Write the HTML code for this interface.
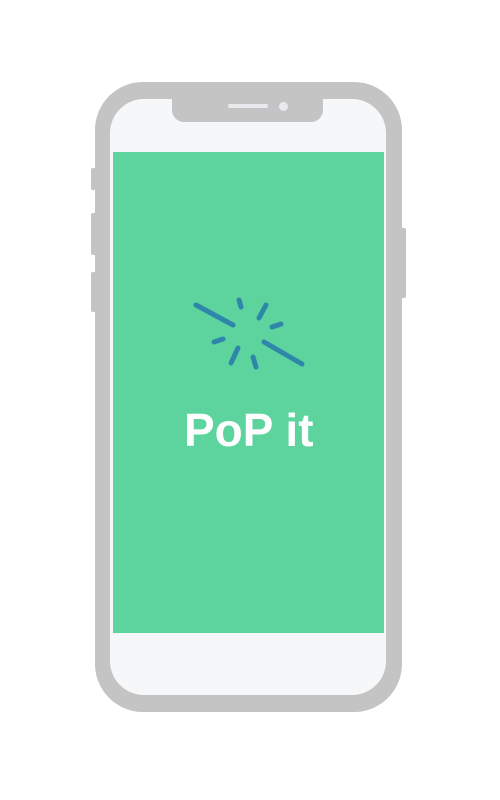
<!DOCTYPE html>
<html><head><style>
html,body{margin:0;padding:0;background:#fff;width:500px;height:800px;overflow:hidden;position:relative;font-family:"Liberation Sans",sans-serif}
.a{position:absolute}
</style></head><body>
<div class="a" style="left:91px;top:168px;width:8px;height:22px;background:#c4c4c4;border-radius:2px"></div>
<div class="a" style="left:91px;top:213px;width:8px;height:42px;background:#c4c4c4;border-radius:2px"></div>
<div class="a" style="left:91px;top:272px;width:8px;height:40px;background:#c4c4c4;border-radius:2px"></div>
<div class="a" style="left:398px;top:228px;width:8px;height:70px;background:#c4c4c4;border-radius:2px"></div>
<div class="a" style="left:95px;top:82px;width:307px;height:630px;background:#c4c4c4;border-radius:48px"></div>
<div class="a" style="left:110px;top:99px;width:276px;height:596px;background:#f6f7f9;border-radius:34px"></div>
<div class="a" style="left:172px;top:95px;width:151px;height:27px;background:#c4c4c4;border-radius:0 0 12px 12px"></div>
<div class="a" style="left:228px;top:104px;width:40px;height:4px;background:#e9e9ee;border-radius:2px"></div>
<div class="a" style="left:279px;top:102px;width:9px;height:9px;background:#e9e9ee;border-radius:50%"></div>
<div class="a" style="left:113px;top:152px;width:271px;height:481px;background:#5dd39e"></div>
<svg class="a" style="left:0;top:0" width="500" height="800">
<g stroke="#2e86ab" stroke-width="5" stroke-linecap="round" fill="none">
<line x1="196" y1="305" x2="233" y2="325"/>
<line x1="239" y1="300" x2="241" y2="307"/>
<line x1="259" y1="318" x2="266" y2="305"/>
<line x1="272" y1="327" x2="281" y2="324"/>
<line x1="214" y1="342" x2="223" y2="339"/>
<line x1="231" y1="363" x2="238" y2="348"/>
<line x1="253" y1="357" x2="256" y2="367"/>
<line x1="264" y1="342" x2="302" y2="364"/>
</g>
<text x="184" y="446" font-family="Liberation Sans,sans-serif" font-weight="bold" font-size="46" fill="#fff">PoP it</text>
</svg>
</body></html>
